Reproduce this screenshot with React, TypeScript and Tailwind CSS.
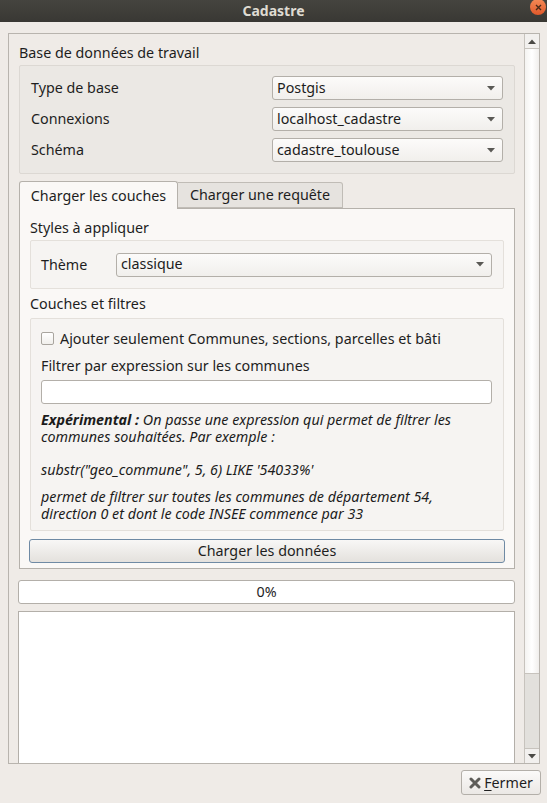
import React from "react";

const font = { fontFamily: '"Noto Sans", "DejaVu Sans", sans-serif' };

function Arrow() {
  return (
    <svg width="8" height="5" viewBox="0 0 8 5" className="shrink-0">
      <path d="M0 0 L8 0 L4 4.5 Z" fill="#5a5955" />
    </svg>
  );
}

function Combo({ value, className = "" }: { value: string; className?: string }) {
  return (
    <div
      className={`h-[24px] flex items-center justify-between pl-[4px] pr-[7px] border border-[#b3afa9] rounded-[3px] bg-gradient-to-b from-[#fcfbfa] to-[#f1efec] text-[#1c1c1c] ${className}`}
    >
      <span className="leading-none">{value}</span>
      <Arrow />
    </div>
  );
}

export default function App() {
  return (
    <div
      className="w-[547px] h-[803px] bg-[#efebe7] flex flex-col text-[14.3px] text-[#1e1e1e] overflow-hidden"
      style={font}
    >
      {/* Title bar */}
      <div className="h-[22px] shrink-0 bg-gradient-to-b from-[#45443f] to-[#393834] flex items-center justify-center relative">
        <span className="font-bold text-[#dfdbd2] text-[14px] leading-none">Cadastre</span>
        <div className="absolute left-[530px] top-[-1px] w-[16px] h-[16px] rounded-full bg-gradient-to-b from-[#f58a56] to-[#e0582a] flex items-center justify-center">
          <svg width="7" height="7" viewBox="0 0 7 7">
            <path d="M1 1 L6 6 M6 1 L1 6" stroke="#4a2a18" strokeWidth="1.4" />
          </svg>
        </div>
      </div>

      {/* Scroll area */}
      <div className="mt-[11px] ml-[8px] mr-[7px] h-[731px] border border-[#b8b4ae] flex">
        <div className="flex-1 flex flex-col pl-[10px] pr-[9px] pt-[8px] overflow-hidden">
          <div className="h-[22px] leading-[22px]">Base de données de travail</div>
          <div className="mt-[1px] h-[109px] border border-[#dcd8d3] rounded-[2px] bg-[#ebe8e4] pl-[11px] pr-[11px] pt-[10px] flex flex-col gap-[7px]">
            {[
              ["Type de base", "Postgis"],
              ["Connexions", "localhost_cadastre"],
              ["Schéma", "cadastre_toulouse"],
            ].map(([l, v]) => (
              <div key={l} className="flex items-center h-[24px]">
                <span className="w-[241px]">{l}</span>
                <Combo value={v} className="flex-1" />
              </div>
            ))}
          </div>

          {/* Tabs */}
          <div className="mt-[7px] flex items-end h-[28px] relative z-10">
            <div className="w-[159px] h-[28px] border border-[#b5b1ab] border-b-0 rounded-t-[3px] bg-[#faf8f6] flex items-center justify-center">
              Charger les couches
            </div>
            <div className="w-[165px] h-[26px] border border-[#c0bcb6] border-l-0 rounded-tr-[3px] bg-[#e6e3df] flex items-center justify-center mb-[1px]">
              Charger une requête
            </div>
          </div>
          <div className="-mt-[1px] h-[361px] border border-[#b5b1ab] bg-[#faf8f6] px-[10px] pt-[8px] flex flex-col">
            <div className="h-[22px] leading-[22px]">Styles à appliquer</div>
            <div className="mt-[1px] h-[49px] border border-[#e4e0db] rounded-[2px] bg-[#f6f4f2] pl-[10px] pr-[11px] flex items-center">
              <span className="w-[75px]">Thème</span>
              <Combo value="classique" className="flex-1" />
            </div>
            <div className="mt-[4px] h-[22px] leading-[22px]">Couches et filtres</div>
            <div className="mt-[3px] h-[213px] border border-[#e4e0db] rounded-[2px] bg-[#f6f4f2] pl-[10px] pr-[11px] pt-[12px] flex flex-col">
              <div className="flex items-center h-[15px]">
                <div className="w-[13px] h-[13px] border border-[#a9a59f] rounded-[2px] bg-gradient-to-b from-[#ffffff] to-[#f1efec]" />
                <span className="ml-[6px]">Ajouter seulement Communes, sections, parcelles et bâti</span>
              </div>
              <div className="mt-[10px] h-[20px] leading-[20px]">Filtrer par expression sur les communes</div>
              <div className="mt-[4px] h-[24px] border border-[#b3afa9] rounded-[3px] bg-white" />
              <div className="mt-[7px] italic leading-[17px] text-[#1c1c1c]">
                <p>
                  <span className="font-bold">Expérimental :</span> On passe une expression qui permet de filtrer les communes souhaitées. Par exemple :
                </p>
                <p className="mt-[16px]">substr("geo_commune", 5, 6) LIKE '54033%'</p>
                <p className="mt-[10px]">
                  permet de filtrer sur toutes les communes de département 54, direction 0 et dont le code INSEE commence par 33
                </p>
              </div>
            </div>
            <div className="mt-[8px] -mx-[1px] h-[24px] border border-[#6f8aa4] rounded-[3px] bg-gradient-to-b from-[#f8f7f6] to-[#e4e1dd] flex items-center justify-center">
              Charger les données
            </div>
          </div>

          {/* Progress */}
          <div className="mt-[11px] h-[24px] border border-[#b3afa9] rounded-[3px] bg-white flex items-center justify-center -ml-[1px]">
            0%
          </div>
          <div className="mt-[7px] flex-1 border border-[#b3afa9] border-b-0 bg-white -ml-[1px]" />
        </div>

        {/* Scrollbar */}
        <div className="w-[15px] border-l border-[#c7c3bd] flex flex-col bg-[#e2e0dc]">
          <div className="h-[15px] border-b border-[#c7c3bd] bg-[#f2f0ee] flex items-center justify-center">
            <svg width="8" height="5" viewBox="0 0 8 5">
              <path d="M0 5 L8 5 L4 0.5 Z" fill="#4a4945" />
            </svg>
          </div>
          <div className="h-[625px] border-b border-[#c7c3bd] bg-gradient-to-r from-[#f4f3f1] via-[#ffffff] to-[#f0eeec]" />
          <div className="flex-1" />
          <div className="h-[15px] border-t border-[#c7c3bd] bg-[#f2f0ee] flex items-center justify-center">
            <svg width="8" height="5" viewBox="0 0 8 5">
              <path d="M0 0 L8 0 L4 4.5 Z" fill="#4a4945" />
            </svg>
          </div>
        </div>
      </div>

      {/* Footer */}
      <div className="flex justify-end pr-[6px] mt-[6px]">
        <div className="w-[80px] h-[25px] border border-[#b3afa9] rounded-[3px] bg-gradient-to-b from-[#fbfaf9] to-[#ebe8e5] flex items-center justify-center gap-[3px]">
          <svg width="12" height="12" viewBox="0 0 12 12">
            <path d="M2 2 L10 10 M10 2 L2 10" stroke="#5d5c58" strokeWidth="3" strokeLinecap="round" />
          </svg>
          <span>
            <span className="underline underline-offset-2">F</span>ermer
          </span>
        </div>
      </div>
    </div>
  );
}
